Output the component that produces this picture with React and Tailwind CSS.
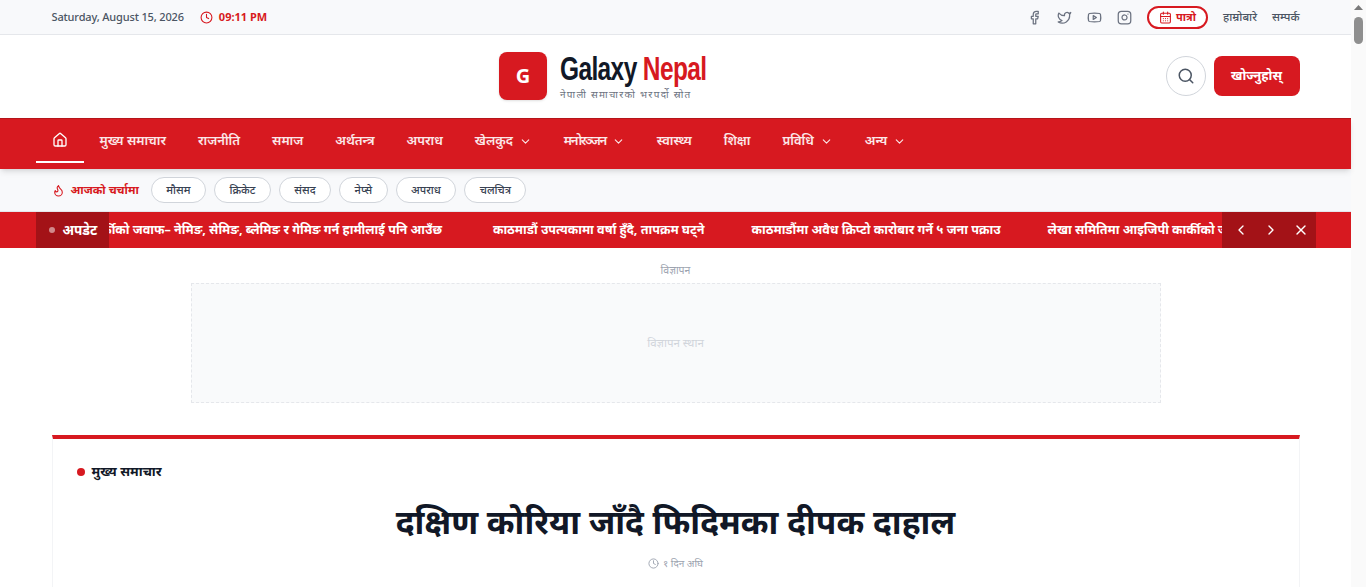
import { CalendarDays, ChevronDown, ChevronLeft, ChevronRight, Clock, Facebook, Flame, House, Instagram, Search, Twitter, X, Youtube } from "lucide-react";

const navItems = [
  { label: "मुख्य समाचार" },
  { label: "राजनीति" },
  { label: "समाज" },
  { label: "अर्थतन्त्र" },
  { label: "अपराध" },
  { label: "खेलकुद", more: true },
  { label: "मनोरञ्जन", more: true, tight: true },
  { label: "स्वास्थ्य" },
  { label: "शिक्षा" },
  { label: "प्रविधि", more: true },
  { label: "अन्य", more: true }
];

const chips = ["मौसम", "क्रिकेट", "संसद", "नेप्से", "अपराध", "चलचित्र"];

const ticker = [
  "लेखा समितिमा आइजिपी कार्कीको जवाफ– नेमिङ, सेमिङ, ब्लेमिङ र गेमिङ गर्न हामीलाई पनि आउँछ",
  "काठमाडौं उपत्यकामा वर्षा हुँदै, तापक्रम घट्ने",
  "काठमाडौंमा अवैध क्रिप्टो कारोबार गर्ने ५ जना पक्राउ",
  "लेखा समितिमा आइजिपी कार्कीको जवाफ– नेमिङ, सेमिङ, ब्लेमिङ र गेमिङ गर्न हामीलाई पनि आउँछ"
];

export default function App() {
  return (
    <div className="flex h-[587px] overflow-hidden bg-white font-['Noto_Sans',sans-serif] text-[#111827]">
      <div className="flex-1 min-w-0">

        {/* Top bar */}
        <div className="h-[35px] bg-[#f8f9fb] border-b border-[#e5e7eb]">
          <div className="max-w-7xl mx-auto px-4 h-full flex items-center justify-between">
            <div className="flex items-center gap-4 text-[11px]">
              <span className="font-medium tracking-[-0.15px] text-[#4b5563]">Saturday, August 15, 2026</span>
              <span className="flex items-center gap-1.5 font-bold text-[#d71920]">
                <Clock size={13} />
                09:11 PM
              </span>
            </div>
            <div className="flex items-center gap-[15px] text-[#6b7280]">
              <Facebook size={15} />
              <Twitter size={15} />
              <Youtube size={15} />
              <Instagram size={15} />
              <span className="h-[23px] px-2.5 flex items-center gap-1 rounded-full border-2 border-[#d71920] bg-white text-[11px] font-bold text-[#d71920]">
                <CalendarDays size={13} />
                पात्रो
              </span>
              <span className="text-[11.5px] font-medium text-[#4b5563]">हाम्रोबारे</span>
              <span className="text-[11.5px] font-medium text-[#4b5563]">सम्पर्क</span>
            </div>
          </div>
        </div>

        {/* Header */}
        <div className="max-w-7xl mx-auto px-4 pb-px h-[83px] flex items-center justify-between">
          <div />
          <div className="w-[219px] flex items-center gap-[13px]">
            <div className="w-12 h-12 shrink-0 rounded-lg bg-[#d71920] shadow-sm flex items-center justify-center text-white text-xl font-bold font-['Open_Sans',sans-serif]">G</div>
            <div className="flex flex-col">
              <span className="origin-left scale-x-[0.72] whitespace-nowrap text-[34px] leading-[32px] font-bold tracking-tight font-['Liberation_Sans',sans-serif]">
                Galaxy <span className="text-[#d71920]">Nepal</span>
              </span>
              <span className="mt-1 text-[10px] leading-3 tracking-[1.3px] whitespace-nowrap text-[#6b7280]">नेपाली समाचारको भरपर्दो स्रोत</span>
            </div>
          </div>
          <div className="flex items-center gap-2">
            <button className="w-10 h-10 rounded-full border border-[#d1d5db] flex items-center justify-center text-[#4b5563]">
              <Search size={18} />
            </button>
            <button className="w-[86px] h-10 rounded-lg bg-[#d71920] text-white text-[13px] font-bold">खोज्नुहोस्</button>
          </div>
        </div>

        {/* Nav */}
        <div className="relative z-10 h-[51px] bg-[#d71920] border-t border-[#b5141a] shadow-md">
          <div className="max-w-[1280px] mx-auto h-full flex">
            <div className="w-12 h-[44px] flex items-center justify-center border-b-2 border-white text-white">
              <House size={16} />
            </div>
            {navItems.map(item => (
              <div key={item.label} className="h-[44px] px-4 flex items-center gap-1.5 text-[13px] font-semibold text-white/90">
                <span className={item.tight ? "tracking-[-1.3px]" : ""}>{item.label}</span>
                {item.more && <ChevronDown size={13} />}
              </div>
            ))}
          </div>
        </div>

        {/* Trending */}
        <div className="h-[43px] bg-[#f8f9fb] border-b border-[#e5e7eb]">
          <div className="max-w-7xl mx-auto px-4 h-full flex items-center gap-3">
            <span className="flex items-center gap-[6px] text-[11.5px] font-bold text-[#d71920]">
              <Flame size={13} />
              आजको चर्चामा
            </span>
            <div className="flex gap-2">
              {chips.map(c => (
                <span key={c} className="h-[26px] px-[14.5px] flex items-center rounded-full border border-[#d1d5db] bg-white text-[11px] font-medium text-[#374151]">{c}</span>
              ))}
            </div>
          </div>
        </div>

        {/* Ticker */}
        <div className="h-9 bg-[#d71920]">
          <div className="relative max-w-[1280px] mx-auto h-full overflow-hidden">
            <div className="absolute left-[-73px] top-0 h-full flex items-center gap-[47px] whitespace-nowrap text-[12.6px] font-bold text-white">
              {ticker.map((t, i) => <span key={i} className={i === 0 ? "mr-1" : ""}>{t}</span>)}
            </div>
            <div className="absolute left-0 top-0 h-full w-[73px] bg-[#a31217] flex items-center gap-2 pl-[13px] text-[13.5px] font-bold text-white">
              <span className="w-1.5 h-1.5 rounded-full bg-white/50" />
              अपडेट
            </div>
            <div className="absolute right-0 top-0 h-full w-[94px] bg-[#a31217] flex items-center justify-center gap-[14px] pl-1 text-white">
              <ChevronLeft size={16} />
              <ChevronRight size={16} />
              <X size={16} />
            </div>
          </div>
        </div>

        {/* Ad */}
        <div className="pt-4 flex flex-col items-center">
          <span className="text-[10.5px] leading-3 text-[#9ca3af] mb-[7px]">विज्ञापन</span>
          <div className="w-[970px] h-[120px] bg-[#f9fafb] border border-dashed border-[#e5e7eb] flex items-center justify-center text-[11.5px] text-[#d1d5db]">
            विज्ञापन स्थान
          </div>
        </div>

        {/* Lead story */}
        <div className="max-w-7xl mx-auto px-4 mt-8">
          <div className="border-t-4 border-[#d71920] border-x border-x-[#f3f4f6] px-6 pt-[23px] pb-10">
            <div className="flex items-center gap-[7px] text-[13.3px] font-bold">
              <span className="w-2 h-2 rounded-full bg-[#d71920]" />
              मुख्य समाचार
            </div>
            <h1 className="mt-[15px] text-center text-[33.5px] leading-[48px] font-bold">दक्षिण कोरिया जाँदै फिदिमका दीपक दाहाल</h1>
            <div className="mt-[11px] flex items-center justify-center gap-1 text-[10px] text-[#9ca3af]">
              <Clock size={11} />
              १ दिन अघि
            </div>
          </div>
        </div>
      </div>

      {/* Page scrollbar as it appears in the picture */}
      <div className="w-[15px] shrink-0 bg-[#fafafa] flex flex-col items-center pt-[5px]">
        <svg width="9" height="5" viewBox="0 0 9 5"><path d="M4.5 0 9 5H0Z" fill="#7a7a7a" /></svg>
        <div className="mt-[7px] w-[9px] h-[27px] rounded-full bg-[#8f8f8f]" />
      </div>
    </div>
  );
}
